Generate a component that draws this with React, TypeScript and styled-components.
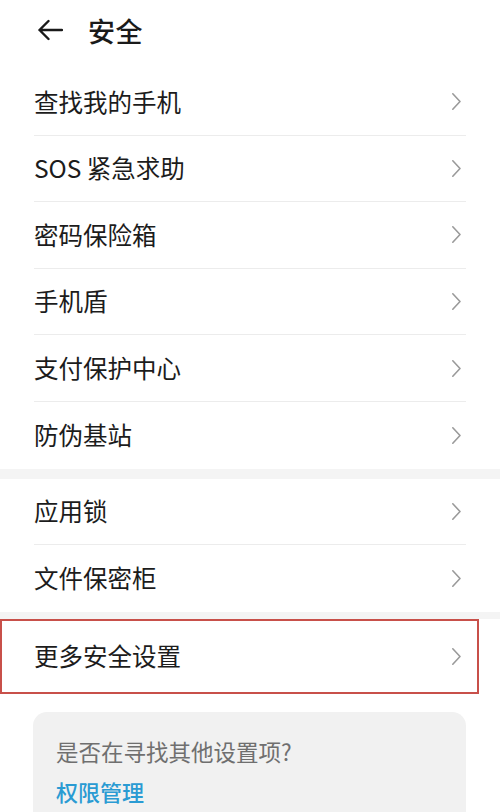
import React from 'react';
import styled, { createGlobalStyle } from 'styled-components';

const GlobalStyle = createGlobalStyle`
  html, body {
    margin: 0;
    padding: 0;
    background: #ffffff;
  }
  body {
    font-family: "Noto Sans CJK SC", "Noto Sans", sans-serif;
    color: #1a1a1a;
  }
`;

const Page = styled.div`
  width: 500px;
  min-height: 812px;
  background: #ffffff;
  overflow: hidden;
`;

const Header = styled.div`
  height: 60px;
  display: flex;
  align-items: center;
  padding: 0 0 9px 37px;
`;

const BackButton = styled.button`
  background: none;
  border: none;
  padding: 0;
  width: 26px;
  height: 22px;
  display: flex;
  align-items: center;
  justify-content: center;
  margin-right: 25px;
  cursor: pointer;
`;

const Title = styled.h1`
  margin: 0;
  font-size: 27px;
  font-weight: 500;
  color: #1a1a1a;
  letter-spacing: 0.5px;
`;

const Group = styled.div`
  background: #ffffff;
`;

const GroupGap = styled.div<{ size: number }>`
  height: ${(props) => props.size}px;
  background: #f4f4f4;
`;

const Row = styled.div<{ last?: boolean }>`
  height: 66.6px;
  margin: 0 34px;
  box-sizing: border-box;
  display: flex;
  align-items: center;
  justify-content: space-between;
  border-bottom: ${(props) => (props.last ? 'none' : '1.5px solid #ececec')};
  padding-right: 4px;
  cursor: pointer;
`;

const RowLabel = styled.span`
  font-size: 24.5px;
  color: #1c1c1c;
  line-height: 1;
`;

const HighlightRow = styled.div`
  width: 479px;
  height: 75px;
  box-sizing: border-box;
  border: 2px solid #c8504a;
  display: flex;
  align-items: center;
  justify-content: space-between;
  padding: 0 15px 0 32px;
  cursor: pointer;
`;

const HintCard = styled.div`
  margin: 18px 34px 0 33px;
  background: #f1f1f1;
  border-radius: 14px;
  padding: 25px 23px 20px;
  display: flex;
  flex-direction: column;
  gap: 12px;
`;

const HintText = styled.span`
  font-size: 22.5px;
  color: #6f6f6f;
  line-height: 28px;
`;

const HintLink = styled.a`
  font-size: 22px;
  font-weight: 500;
  color: #2a9bd3;
  line-height: 28px;
  text-decoration: none;
`;

const Chevron = () => (
  <svg width="11" height="19" viewBox="0 0 11 19" fill="none">
    <path
      d="M1.8 1.8 L9 9.5 L1.8 17.2"
      stroke="#9a9a9a"
      strokeWidth="1.6"
      strokeLinecap="round"
      strokeLinejoin="round"
    />
  </svg>
);

const BackArrow = () => (
  <svg width="26" height="22" viewBox="0 0 26 22" fill="none">
    <path
      d="M25 11 H2.5 M11.5 2 L2.5 11 L11.5 20"
      stroke="#1a1a1a"
      strokeWidth="2.4"
      strokeLinecap="round"
      strokeLinejoin="round"
    />
  </svg>
);

const groupOne = ['查找我的手机', 'SOS 紧急求助', '密码保险箱', '手机盾', '支付保护中心', '防伪基站'];
const groupTwo = ['应用锁', '文件保密柜'];

const App: React.FC = () => {
  return (
    <Page>
      <GlobalStyle />
      <Header>
        <BackButton aria-label="返回">
          <BackArrow />
        </BackButton>
        <Title>安全</Title>
      </Header>

      <Group>
        {groupOne.map((label, i) => (
          <Row key={label} last={i === groupOne.length - 1}>
            <RowLabel>{label}</RowLabel>
            <Chevron />
          </Row>
        ))}
      </Group>
      <GroupGap size={10} />

      <Group>
        {groupTwo.map((label, i) => (
          <Row key={label} last={i === groupTwo.length - 1}>
            <RowLabel>{label}</RowLabel>
            <Chevron />
          </Row>
        ))}
      </Group>
      <GroupGap size={7} />

      <HighlightRow>
        <RowLabel>更多安全设置</RowLabel>
        <Chevron />
      </HighlightRow>

      <HintCard>
        <HintText>是否在寻找其他设置项?</HintText>
        <HintLink href="#">权限管理</HintLink>
      </HintCard>
    </Page>
  );
};

export default App;
